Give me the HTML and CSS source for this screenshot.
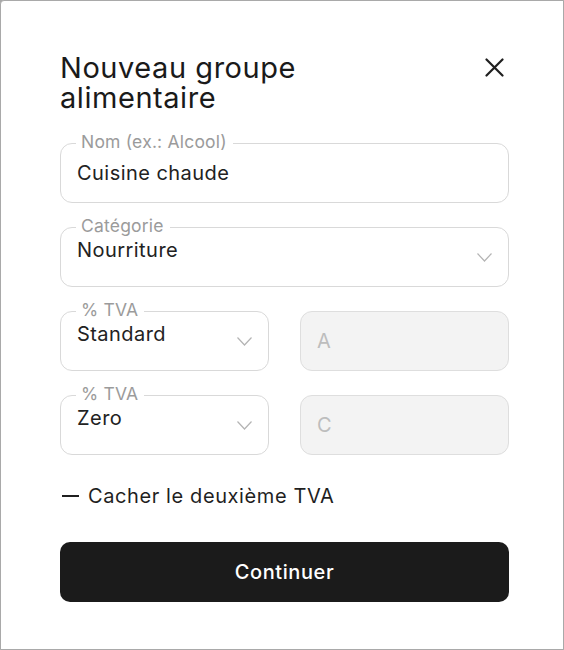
FILE: index.html
```html
<!DOCTYPE html>
<html lang="fr">
<head>
<meta charset="utf-8">
<title>Nouveau groupe alimentaire</title>
<link rel="stylesheet" href="styles.css">
</head>
<body>
<div class="dialog">
  <div class="header">
    <h1 class="title">Nouveau groupe alimentaire</h1>
    <button class="close" aria-label="Fermer">
      <svg width="19" height="19" viewBox="0 0 19 19"><path d="M1.5 1.5 L17.5 17.5 M17.5 1.5 L1.5 17.5" stroke="#1f1f1f" stroke-width="2.2" stroke-linecap="round" fill="none"/></svg>
    </button>
  </div>

  <div class="form">
    <div class="field">
      <span class="field-label">Nom (ex.: Alcool)</span>
      <span class="value">Cuisine chaude</span>
    </div>

    <div class="field select">
      <span class="field-label">Catégorie</span>
      <span class="value select-value">Nourriture</span>
      <svg class="chevron" width="15" height="9" viewBox="0 0 15 9"><path d="M0.5 0.5 L7.5 8 L14.5 0.5" stroke="#b4b4b4" stroke-width="1.2" fill="none"/></svg>
    </div>

    <div class="pair">
      <div class="field select">
        <span class="field-label">% TVA</span>
        <span class="value select-value">Standard</span>
        <svg class="chevron" width="15" height="9" viewBox="0 0 15 9"><path d="M0.5 0.5 L7.5 8 L14.5 0.5" stroke="#b4b4b4" stroke-width="1.2" fill="none"/></svg>
      </div>
      <div class="field disabled">
        <span class="placeholder">A</span>
      </div>
    </div>

    <div class="pair">
      <div class="field select">
        <span class="field-label">% TVA</span>
        <span class="value select-value">Zero</span>
        <svg class="chevron" width="15" height="9" viewBox="0 0 15 9"><path d="M0.5 0.5 L7.5 8 L14.5 0.5" stroke="#b4b4b4" stroke-width="1.2" fill="none"/></svg>
      </div>
      <div class="field disabled">
        <span class="placeholder">C</span>
      </div>
    </div>
  </div>

  <div class="toggle">
    <span class="dash"></span>
    <span>Cacher le deuxième TVA</span>
  </div>

  <button class="primary">Continuer</button>
</div>
</body>
</html>
```

FILE: styles.css
```css
html, body {
  margin: 0;
  padding: 0;
  background: #a9a9a9;
}

body {
  font-family: Inter, "Noto Sans", sans-serif;
  color: #222222;
}

.dialog {
  box-sizing: border-box;
  width: 564px;
  height: 650px;
  border: 1px solid #a9a9a9;
  border-top-left-radius: 4px;
  padding: 52px 54px 0 59px;
  background: #ffffff;
}

.header {
  display: flex;
  justify-content: space-between;
  align-items: flex-start;
}

.title {
  margin: 0;
  width: 320px;
  font-size: 29px;
  line-height: 30px;
  font-weight: 400;
  letter-spacing: 0.55px;
  color: #1a1a1a;
}

.close {
  border: 0;
  background: none;
  padding: 0;
  margin: 5px 5px 0 0;
  width: 19px;
  height: 19px;
  display: flex;
  cursor: pointer;
}

.form {
  margin-top: 30px;
  display: flex;
  flex-direction: column;
  gap: 24px;
}

.field {
  position: relative;
  box-sizing: border-box;
  height: 60px;
  border: 1px solid #d9d9d9;
  border-radius: 12px;
  padding: 0 16px 0 16px;
  display: flex;
  align-items: center;
  justify-content: space-between;
}

.field-label {
  position: absolute;
  top: -13px;
  left: 15px;
  padding: 0 6px 0 5px;
  background: #ffffff;
  font-size: 17.5px;
  line-height: 22px;
  letter-spacing: 0.2px;
  color: #9b9b9b;
}

.value {
  font-size: 20px;
  line-height: 24px;
  letter-spacing: 0.45px;
  color: #222222;
}

.select-value {
  padding-bottom: 14px;
}

.chevron {
  flex: none;
}

.pair {
  display: grid;
  grid-template-columns: 1fr 1fr;
  gap: 31px;
}

.disabled {
  background: #f3f3f3;
  border-color: #dedede;
}

.placeholder {
  font-size: 20px;
  line-height: 24px;
  color: #bdbdbd;
}

.toggle {
  margin-top: 29px;
  display: flex;
  align-items: center;
  gap: 9px;
  font-size: 20px;
  line-height: 24px;
  letter-spacing: 0.6px;
  color: #1f1f1f;
}

.dash {
  width: 17px;
  height: 2px;
  background: #1f1f1f;
  margin-left: 2px;
}

.primary {
  display: block;
  box-sizing: border-box;
  width: 100%;
  height: 60px;
  margin-top: 34px;
  border: 0;
  border-radius: 10px;
  background: #1b1b1b;
  color: #ffffff;
  font-family: Inter, "Noto Sans", sans-serif;
  font-size: 20px;
  font-weight: 500;
  letter-spacing: 0.6px;
  cursor: pointer;
}
```
